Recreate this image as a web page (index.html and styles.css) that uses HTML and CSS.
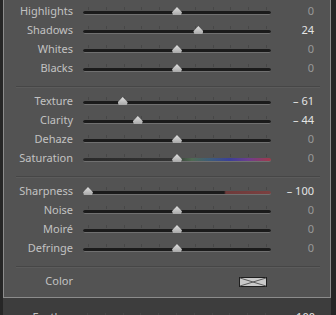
FILE: index.html
```html
<!DOCTYPE html>
<html lang="en">
<head>
  <meta charset="UTF-8" />
  <title>Develop - Basic</title>
  <link rel="stylesheet" href="styles.css">
</head>
<body>
  <div class="panel">
    <!-- Tone -->
    <div class="group">
      <div class="row">
        <span class="label">Highlights</span>
        <div class="slider"><span class="thumb" style="--p: 50"></span></div>
        <span class="value">0</span>
      </div>
      <div class="row">
        <span class="label">Shadows</span>
        <div class="slider"><span class="thumb" style="--p: 62"></span></div>
        <span class="value set">24</span>
      </div>
      <div class="row">
        <span class="label">Whites</span>
        <div class="slider"><span class="thumb" style="--p: 50"></span></div>
        <span class="value">0</span>
      </div>
      <div class="row">
        <span class="label">Blacks</span>
        <div class="slider"><span class="thumb" style="--p: 50"></span></div>
        <span class="value">0</span>
      </div>
    </div>
    <div class="sep"></div>

    <!-- Presence -->
    <div class="group">
      <div class="row">
        <span class="label">Texture</span>
        <div class="slider"><span class="thumb" style="--p: 19.5"></span></div>
        <span class="value set">&ndash; 61</span>
      </div>
      <div class="row">
        <span class="label">Clarity</span>
        <div class="slider"><span class="thumb" style="--p: 28"></span></div>
        <span class="value set">&ndash; 44</span>
      </div>
      <div class="row">
        <span class="label">Dehaze</span>
        <div class="slider"><span class="thumb" style="--p: 50"></span></div>
        <span class="value">0</span>
      </div>
      <div class="row">
        <span class="label">Saturation</span>
        <div class="slider saturation"><span class="thumb" style="--p: 50"></span></div>
        <span class="value">0</span>
      </div>
    </div>
    <div class="sep"></div>

    <!-- Detail -->
    <div class="group">
      <div class="row">
        <span class="label">Sharpness</span>
        <div class="slider sharpness"><span class="thumb" style="--p: 0"></span></div>
        <span class="value set">&ndash; 100</span>
      </div>
      <div class="row">
        <span class="label">Noise</span>
        <div class="slider"><span class="thumb" style="--p: 50"></span></div>
        <span class="value">0</span>
      </div>
      <div class="row">
        <span class="label">Moiré</span>
        <div class="slider"><span class="thumb" style="--p: 50"></span></div>
        <span class="value">0</span>
      </div>
      <div class="row">
        <span class="label">Defringe</span>
        <div class="slider"><span class="thumb" style="--p: 50"></span></div>
        <span class="value">0</span>
      </div>
    </div>
    <div class="sep"></div>

    <div class="row color-row">
      <span class="label">Color</span>
      <div class="swatch-wrap">
        <svg class="swatch" width="28" height="10" viewBox="0 0 28 10">
          <rect x="0.5" y="0.5" width="27" height="9" fill="#c9c9c9" stroke="#1e1e1e"/>
          <path d="M1 1 L14 5 L27 1 M1 9 L14 5 L27 9" stroke="#5a5a5a" stroke-width="1" fill="none"/>
        </svg>
      </div>
      <span class="value"></span>
    </div>
  </div>

  <!-- next panel, cut off by the window -->
  <div class="next-panel">
    <div class="row">
      <span class="label">Feather</span>
      <div class="slider"></div>
      <span class="value set">100</span>
    </div>
  </div>
</body>
</html>
```

FILE: styles.css
```css
* { margin: 0; padding: 0; box-sizing: border-box; }
body {
  font-family: "Noto Sans", "Open Sans", sans-serif;
  font-size: 11px;
  background-color: #262626;
  width: 336px;
  height: 315px;
  overflow: hidden;
}
.panel {
  margin: 0 5px 0 3px;
  padding: 2px 0 6px;
  background-color: #535353;
  border: 1px solid #8c8c8c;
  border-top: none;
}
.row {
  display: flex;
  align-items: center;
  height: 19px;
}
.label {
  width: 69px;
  text-align: right;
  color: #c2c2c2;
  line-height: 19px;
  position: relative;
  top: -1px;
}
/* slider: the thumb travels 5px inside each end of the track (178px) */
.slider {
  position: relative;
  width: 188px;
  height: 19px;
  margin-left: 10px;
  background-image: repeating-linear-gradient(to right, #474747 0 1px, transparent 1px 17.8px);
  background-size: 179px 3px;
  background-position: 5px 5px;
  background-repeat: no-repeat;
}
.slider::before {
  content: "";
  position: absolute;
  left: 0;
  right: 0;
  top: 9px;
  height: 3px;
  background-color: #1b1b1b;
  border-bottom: 1px solid #707070;
  border-radius: 2px;
}
.saturation::before {
  background: linear-gradient(to right, #2a2a2a 0%, #333 48%, #4f6b52 58%, #3c5b7c 68%, #3b3f98 78%, #6d3d8e 88%, #a33a48 100%);
}
.sharpness::before {
  background: linear-gradient(to right, #1b1b1b 0%, #1b1b1b 75%, #6e3b3b 76%, #7c4040 100%);
}
.thumb {
  position: absolute;
  top: 5px;
  left: calc(var(--p) * 1.78px);
  width: 10px;
  height: 8px;
  background: linear-gradient(#e0e0e0, #a8a8a8);
  clip-path: polygon(50% 0, 100% 65%, 90% 100%, 10% 100%, 0 65%);
  z-index: 1;
}
.value {
  flex: 1;
  text-align: right;
  padding-right: 16px;
  color: #999;
  line-height: 19px;
  position: relative;
  top: -1px;
}
.value.set {
  color: #e4e4e4;
}
.sep {
  margin: 8px 10px 4px 12px;
  height: 2px;
  border-top: 1px solid #464646;
  border-bottom: 1px solid #5b5b5b;
}
.color-row .swatch-wrap {
  width: 188px;
  margin-left: 10px;
  display: flex;
  justify-content: flex-end;
  padding-right: 4px;
}
.swatch { display: block; }
.next-panel {
  margin-left: 3px;
  margin-right: 5px;
  background-color: #3d3d3d;
  padding-top: 10px;
  height: 40px;
}
.next-panel .label { padding-left: 2px; }
```
